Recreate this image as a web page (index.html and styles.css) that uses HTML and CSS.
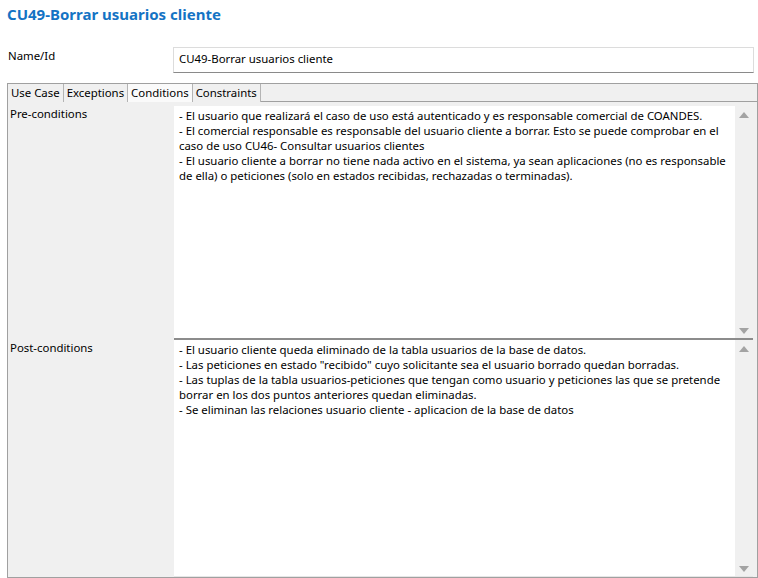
FILE: index.html
```html
<!DOCTYPE html>
<html>
<head>
<meta charset="utf-8">
<link rel="stylesheet" href="styles.css">
</head>
<body>
<div class="page">
  <h1 class="title">CU49-Borrar usuarios cliente</h1>
  <div class="name-row">
    <div class="name-label">Name/Id</div>
    <div class="name-input">CU49-Borrar usuarios cliente</div>
  </div>
  <div class="panel">
    <div class="tabs">
      <div class="tab">Use Case</div>
      <div class="tab">Exceptions</div>
      <div class="tab active">Conditions</div>
      <div class="tab">Constraints</div>
    </div>
    <div class="rows">
      <div class="row row-pre">
        <div class="row-label">Pre-conditions</div>
        <div class="area">
          <div class="area-text">- El usuario que realizará el caso de uso está autenticado y es responsable comercial de COANDES.<br>- El comercial responsable es responsable del usuario cliente a borrar. Esto se puede comprobar en el caso de uso CU46- Consultar usuarios clientes<br>- El usuario cliente a borrar no tiene nada activo en el sistema, ya sean aplicaciones (no es responsable de ella) o peticiones (solo en estados recibidas, rechazadas o terminadas).</div>
          <div class="scroll"><span class="arr up"></span><span class="arr down"></span></div>
        </div>
      </div>
      <div class="row row-post">
        <div class="row-label">Post-conditions</div>
        <div class="area">
          <div class="area-text">- El usuario cliente queda eliminado de la tabla usuarios de la base de datos.<br>- Las peticiones en estado "recibido" cuyo solicitante sea el usuario borrado quedan borradas.<br>- Las tuplas de la tabla usuarios-peticiones que tengan como usuario y peticiones las que se pretende borrar en los dos puntos anteriores quedan eliminadas.<br>- Se eliminan las relaciones usuario cliente - aplicacion de la base de datos</div>
          <div class="scroll"><span class="arr up"></span><span class="arr down"></span></div>
        </div>
      </div>
    </div>
  </div>
</div>
</body>
</html>
```

FILE: styles.css
```css
* { box-sizing: border-box; }
html, body { margin: 0; padding: 0; background: #ffffff; }
body {
  font-family: "Noto Sans", "Open Sans", sans-serif;
  font-size: 11.4px;
  color: #000;
  width: 758px;
  height: 578px;
  overflow: hidden;
}
.page { padding: 4px 0 0 7px; }
.title {
  margin: 0;
  font-size: 15px;
  font-weight: bold;
  color: #1473c4;
  line-height: 20px;
  height: 20px;
}
.name-row {
  display: flex;
  margin-top: 23px;
  height: 26px;
}
.name-label {
  width: 166px;
  padding: 1px 0 0 1px;
  line-height: 15px;
}
.name-input {
  width: 581px;
  height: 26px;
  border: 1px solid #dcdcdc;
  border-bottom-color: #8a8a8a;
  padding: 3px 0 0 5px;
  line-height: 15px;
}
.panel {
  margin-top: 10px;
  width: 751px;
  height: 495px;
  border: 1px solid #a0a0a0;
  border-top: none;
  background: #f0f0f0;
  display: flex;
  flex-direction: column;
}
.tabs {
  display: flex;
  height: 19px;
  border-top: 1px solid #a0a0a0;
  border-bottom: 1px solid #a0a0a0;
  background: #f0f0f0;
}
.tab {
  height: 18px;
  line-height: 17px;
  padding: 0 3px;
  border-right: 1px solid #b4b4b4;
  background: #f0f0f0;
  white-space: nowrap;
}
.tab.active { background: #fafafa; }
.rows {
  flex: 1;
  display: flex;
  flex-direction: column;
  padding-top: 4px;
}
.row { display: flex; }
.row-pre { height: 234px; }
.row-post { flex: 1; }
.row-label {
  width: 166px;
  padding: 0 0 0 2px;
  line-height: 15px;
}
.area {
  width: 579px;
  background: #ffffff;
  border-bottom: 2px solid #8c8c8c;
  display: flex;
}
.row-post .area { border-bottom: 1px solid #e6e6e6; }
.area-text {
  flex: 1;
  padding: 2px 6px 0 5px;
  line-height: 15px;
}
.scroll {
  width: 18px;
  background: #f0f0f0;
  display: flex;
  flex-direction: column;
  justify-content: space-between;
  align-items: center;
  padding: 6px 0 4px;
}
.arr {
  width: 0; height: 0;
  border-left: 5px solid transparent;
  border-right: 5px solid transparent;
}
.arr.up { border-bottom: 6px solid #a3a3a3; }
.arr.down { border-top: 6px solid #a3a3a3; }
```
